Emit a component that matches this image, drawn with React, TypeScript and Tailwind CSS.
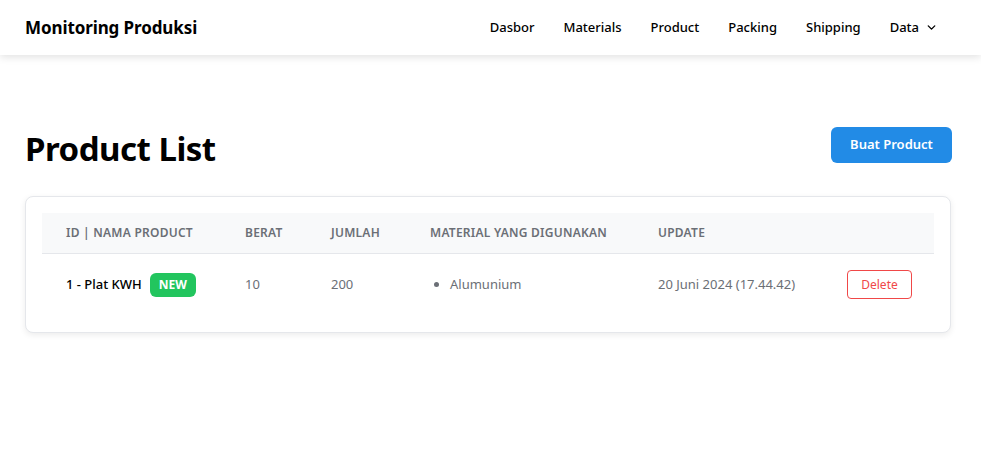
import { ChevronDown } from "lucide-react";

const navItems = ["Dasbor", "Materials", "Product", "Packing", "Shipping"];

export default function App() {
  return (
    <div className="min-h-screen bg-white text-black" style={{ fontFamily: '"Noto Sans", "Open Sans", sans-serif' }}>
      {/* Navbar */}
      <nav className="flex h-[55px] items-center justify-between bg-white px-[25px] shadow-[0_2px_8px_rgba(0,0,0,0.12)]">
        <span className="text-[17px] font-bold tracking-[-0.1px]">Monitoring Produksi</span>
        <ul className="flex items-center gap-[29px] pr-[18px] text-[13px] font-medium">
          {navItems.map((item) => (
            <li key={item}>{item}</li>
          ))}
          <li className="flex items-center gap-[6px]">
            Data <ChevronDown className="h-[13px] w-[13px]" strokeWidth={2.5} />
          </li>
        </ul>
      </nav>

      <main className="pl-[25px] pr-[29px] pt-[72px]">
        <div className="flex items-start justify-between">
          <h1 className="pt-[5px] text-[33px] font-bold leading-none tracking-[-0.5px]">Product List</h1>
          <button className="h-[36px] w-[121px] rounded-md bg-[#228be6] text-[13px] font-semibold text-white">
            Buat Product
          </button>
        </div>

        <div className="mt-[31px] mr-[1px] rounded-lg border border-gray-200 bg-white p-4 shadow-[0_2px_6px_rgba(0,0,0,0.08)]">
          <table className="w-full table-fixed border-collapse text-left">
            <colgroup>
              <col className="w-[179px]" />
              <col className="w-[86px]" />
              <col className="w-[99px]" />
              <col className="w-[228px]" />
              <col className="w-[189px]" />
              <col />
            </colgroup>
            <thead>
              <tr className="h-[40px] border-b border-gray-200 bg-[#f8f9fa] text-[12px] uppercase tracking-[0.02em] text-[#6b6f76]">
                <th className="px-6 font-semibold">ID | Nama Product</th>
                <th className="px-6 font-semibold">Berat</th>
                <th className="px-6 font-semibold">Jumlah</th>
                <th className="px-6 font-semibold">Material yang digunakan</th>
                <th className="px-6 font-semibold">Update</th>
                <th className="px-6"></th>
              </tr>
            </thead>
            <tbody>
              <tr className="h-[63px] text-[13px] text-[#6b6f76]">
                <td className="px-6">
                  <div className="flex items-center gap-2 whitespace-nowrap font-medium text-black">
                    1 - Plat KWH
                    <span className="rounded-md bg-[#22c55e] px-[9px] py-[3px] text-[12px] font-bold text-white">NEW</span>
                  </div>
                </td>
                <td className="px-6">10</td>
                <td className="px-6">200</td>
                <td className="px-6">
                  <ul className="list-disc pl-[20px] marker:text-[#6b6f76]">
                    <li>Alumunium</li>
                  </ul>
                </td>
                <td className="px-6 whitespace-nowrap">20 Juni 2024 (17.44.42)</td>
                <td className="px-6">
                  <button className="h-[29px] w-[65px] rounded border border-[#f04848] text-[12px] text-[#f04848]">
                    Delete
                  </button>
                </td>
              </tr>
            </tbody>
          </table>
        </div>
      </main>
    </div>
  );
}
